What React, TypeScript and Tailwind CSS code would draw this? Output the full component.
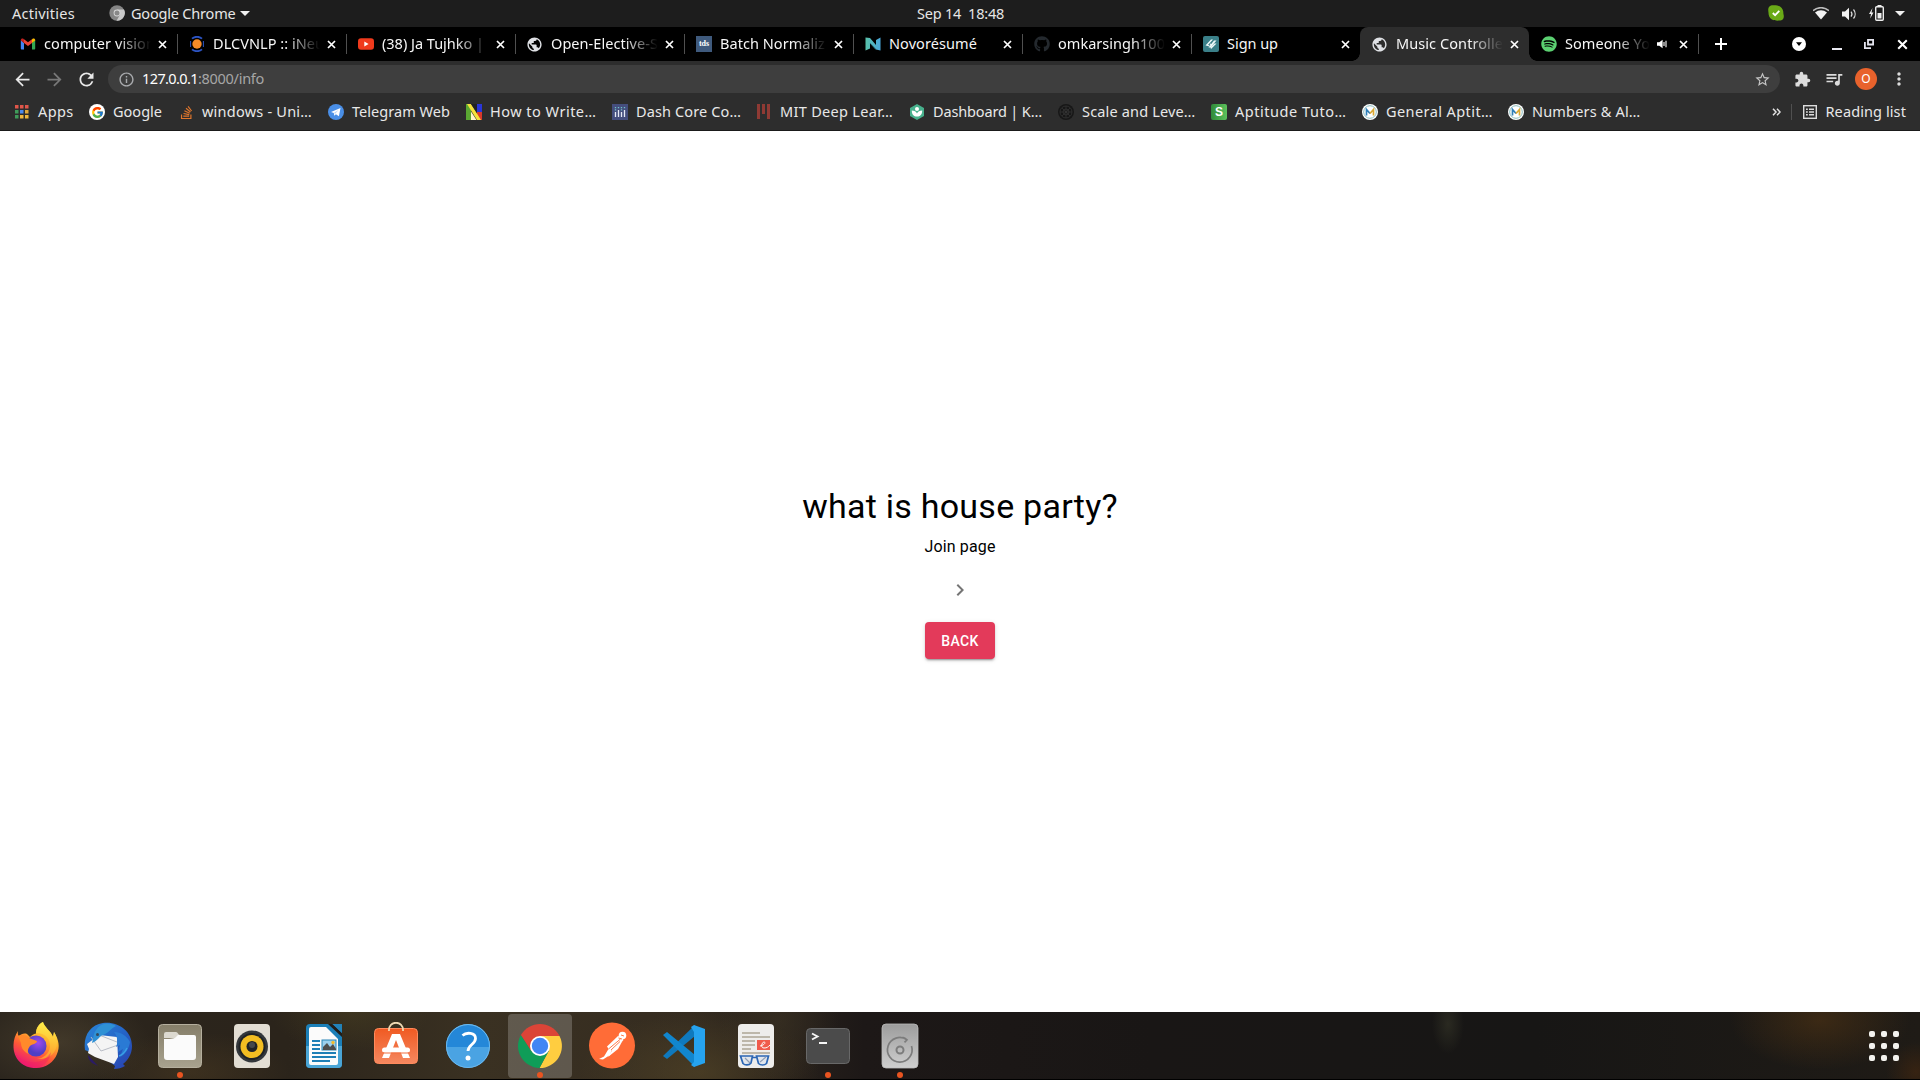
import React, { useLayoutEffect, useRef, useState } from "react";
import {
  MdArrowBack, MdArrowForward, MdRefresh, MdInfoOutline, MdStarBorder, MdExtension,
  MdQueueMusic, MdMoreVert, MdPublic, MdChevronRight,
} from "react-icons/md";
import { FaGithub, FaSpotify, FaStackOverflow } from "react-icons/fa";
import { FcGoogle } from "react-icons/fc";

/** A single line of text whose letter spacing is tuned so that it spans `w` pixels. */
function Fit({ w, children, className = "", flat = false }: { w: number; children: string; className?: string; flat?: boolean }) {
  const ref = useRef<HTMLSpanElement>(null);
  const [ls, setLs] = useState(0);
  useLayoutEffect(() => {
    if (ref.current) setLs((w - ref.current.getBoundingClientRect().width) / children.length);
  }, [w, children]);
  return (
    <span ref={ref} className={`inline-block whitespace-pre ${flat ? "" : "-translate-y-px"} ${className}`} style={{ letterSpacing: ls }}>
      {children}
    </span>
  );
}

const X = ({ s = 9 }: { s?: number }) => (
  <svg width={s} height={s} viewBox="0 0 9 9" stroke="#fff" strokeWidth="1.7">
    <path d="M1 1l7 7M8 1l-7 7" />
  </svg>
);

const Globe = () => <MdPublic size={17} color="#dfe1e5" className="-ml-px" />;

const Gmail = () => (
  <svg width="16" height="16" viewBox="0 0 16 16">
    <path d="M.8 4v8.4c0 .6.4 1 1 1H4V7z" fill="#4285f4" />
    <path d="M15.2 4v8.4c0 .6-.4 1-1 1H12V7z" fill="#34a853" />
    <path d="M12 3.4V7l3.2-2.4V4c0-1.5-1.7-2-2.6-1.2z" fill="#fbbc04" />
    <path d="M4 3.4V7L.8 4.6V4c0-1.5 1.7-2 2.6-1.2z" fill="#c5221f" />
    <path d="M4 7V3.3l4 3 4-3V7l-4 3z" fill="#ea4335" />
  </svg>
);
const Ineuron = () => (
  <svg width="16" height="16" viewBox="0 0 16 16">
    <circle cx="8" cy="8" r="4.7" fill="#f58a27" />
    <path d="M3 2.7a7.5 7.5 0 0 1 10 0M3 13.3a7.5 7.5 0 0 0 10 0" fill="none" stroke="#2c54c4" strokeWidth="1.8" />
    <path d="M1.6 5v6M14.4 5v6" stroke="#2c54c4" strokeWidth="1" />
  </svg>
);
const Youtube = () => (
  <svg width="16" height="16" viewBox="0 0 16 16">
    <rect x="0" y="2.3" width="16" height="11.4" rx="3" fill="#f03a1c" />
    <path d="M6.3 5.6v4.8L10.6 8z" fill="#fff" />
  </svg>
);
const Tds = () => (
  <span className="flex size-4 items-center justify-center bg-[#3f5a7d] pb-px font-['Liberation_Serif'] text-[8px] leading-none font-bold text-white">tds</span>
);
const Novo = () => (
  <svg width="16" height="16" viewBox="0 0 16 16">
    <defs><linearGradient id="nv"><stop stopColor="#58c1a8" /><stop offset="1" stopColor="#4aa8dc" /></linearGradient></defs>
    <path d="M.5 1.5L5 2l6 7V4l4.5-2.5v13L11 13.5 5 7v5.5L.5 14.5z" fill="url(#nv)" />
    <path d="M5 7l6 6.5" stroke="#2b7f8f" strokeWidth="1" />
  </svg>
);
const SignUp = () => (
  <svg width="16" height="16" viewBox="0 0 16 16">
    <rect width="16" height="16" rx="2" fill="#3a7f88" />
    <path d="M2.5 9.5h2L10 3.5H8zM5.5 11.5h2l6-7h-2.5zM8 13l5.5-5.5h-2L7.5 11.5z" fill="#f0fafa" />
    <path d="M3.5 9l3 1M7 8l2 1" stroke="#f0fafa" strokeWidth="1.2" />
  </svg>
);

type Tab = { icon: React.ReactNode; title: string; w: number; active?: boolean; sound?: boolean; sep?: boolean; fade?: boolean };
const tabs: Tab[] = [
  { icon: <Gmail />, title: "computer vision", w: 111, sep: true, fade: true },
  { icon: <Ineuron />, title: "DLCVNLP :: iNeu", w: 111, sep: true, fade: true },
  { icon: <Youtube />, title: "(38) Ja Tujhko |", w: 102, sep: true, fade: true },
  { icon: <Globe />, title: "Open-Elective-S", w: 107, sep: true, fade: true },
  { icon: <Tds />, title: "Batch Normaliz", w: 105, sep: true, fade: true },
  { icon: <Novo />, title: "Novorésumé", w: 88, sep: true },
  { icon: <FaGithub size={16} color="#24292e" />, title: "omkarsingh100", w: 107, sep: true, fade: true },
  { icon: <SignUp />, title: "Sign up", w: 51 },
  { icon: <Globe />, title: "Music Controlle", w: 107, active: true, fade: true },
  { icon: <FaSpotify size={16} color="#5bd071" />, title: "Someone Yo", w: 85, sep: true, sound: true, fade: true },
];

function TabItem({ t }: { t: Tab }) {
  return (
    <div className={`relative flex h-[34px] w-[169px] shrink-0 items-center pl-3 ${t.active ? "rounded-t-lg bg-[#2d2d2d]" : ""}`}>
      {t.active && (
        <>
          <span className="absolute bottom-0 -left-2 size-2 bg-[radial-gradient(circle_at_0_0,transparent_7.5px,#2d2d2d_8px)]" />
          <span className="absolute -right-2 bottom-0 size-2 bg-[radial-gradient(circle_at_100%_0,transparent_7.5px,#2d2d2d_8px)]" />
        </>
      )}
      <span className="flex size-4 shrink-0 items-center">{t.icon}</span>
      <span
        className={`ml-2 shrink-0 overflow-hidden text-[14.5px] leading-5 text-[#f6f6f6] ${t.sound ? "w-[85px]" : "w-[107px]"} ${t.fade ? "[mask-image:linear-gradient(to_right,#000_calc(100%-34px),transparent)]" : ""}`}
      >
        <Fit w={t.w}>{t.title}</Fit>
      </span>
      {t.sound && (
        <svg width="10" height="10" viewBox="0 0 10 10" className="ml-[7px] shrink-0">
          <path d="M0 3.3h2.3L5.6.8v8.4L2.3 6.7H0z" fill="#fff" />
          <path d="M7 3v4M9 1.800v6.400" stroke="#fff" strokeWidth="1.1" />
        </svg>
      )}
      <span className={`flex shrink-0 ${t.sound ? "ml-[12px]" : "ml-[7px]"}`}><X /></span>
      {t.sep && <span className="absolute top-[7px] right-[-1px] h-5 w-px bg-[#505050]" />}
    </div>
  );
}

const AppsIcon = () => (
  <svg width="16" height="16" viewBox="0 0 16 16">
    {["#e0564a", "#e0564a", "#e0564a", "#3f9c5a", "#4a8af0", "#e0a83a", "#3f9c5a", "#efb73e", "#efb73e"].map((c, i) => (
      <rect key={i} x={1 + (i % 3) * 5} y={1 + Math.floor(i / 3) * 5} width="3.5" height="3.5" fill={c} />
    ))}
  </svg>
);
const Mlogo = () => (
  <svg width="16" height="16" viewBox="0 0 16 16">
    <circle cx="8" cy="8" r="8" fill="#fff" />
    <circle cx="8" cy="8" r="6.3" fill="none" stroke="#7bb3b5" strokeWidth=".9" />
    <path d="M4.5 11.5v-6L8 9.5" fill="none" stroke="#2f7fb8" strokeWidth="1.7" />
    <path d="M8 9.5l3.5-4v6" fill="none" stroke="#d9a935" strokeWidth="1.7" />
  </svg>
);
const bookmarks: { icon: React.ReactNode; title: string; tw: number; w: number }[] = [
  { icon: <AppsIcon />, title: "Apps", tw: 35.5, w: 75 },
  { icon: <span className="flex size-4 items-center justify-center rounded-full bg-white"><FcGoogle size={13} /></span>, title: "Google", tw: 49, w: 89 },
  { icon: <FaStackOverflow size={15} color="#e0762c" className="ml-px" />, title: "windows - Uni…", tw: 110, w: 150 },
  {
    icon: <svg width="16" height="16" viewBox="0 0 16 16"><circle cx="8" cy="8" r="8" fill="#4a8fe7" /><path d="M3 8l9.5-4-1.6 8.2-3-2-1.6 1.5-.5-2.6z" fill="#fff" /><path d="M5.800 9.100L10.500 6 7.200 9.700" fill="#b9d2f5" /></svg>,
    title: "Telegram Web", tw: 98, w: 138,
  },
  {
    icon: <svg width="16" height="16" viewBox="0 0 16 16"><path d="M0 0h5v16H0z" fill="#5aa832" /><path d="M11 0h5v8h-5z" fill="#2a36d8" /><path d="M11 8h5v8h-5z" fill="#d8392b" /><path d="M1 0h4l10 16h-4z" fill="#f4e23c" /><path d="M5 7.5V16h5.5z" fill="#fff6c8" /><path d="M5 0h6v9z" fill="#222" /></svg>,
    title: "How to Write…", tw: 106.5, w: 146,
  },
  {
    icon: <svg width="16" height="16" viewBox="0 0 16 16"><rect width="16" height="16" fill="#454e7d" /><path d="M3.5 8v5M6.5 6v7M9.5 8v5M12.5 6v7" stroke="#e6e9f5" strokeWidth="1.3" /><path d="M3.5 3v4M6.5 3v2M9.5 3v4M12.5 3v2" stroke="#6fc3c8" strokeWidth="1.3" strokeDasharray="1.2 1" /></svg>,
    title: "Dash Core Co…", tw: 105, w: 144,
  },
  {
    icon: <svg width="16" height="16" viewBox="0 0 16 16"><path d="M1 0h3v15H1zM6 0h3v10H6zM11 0h3v15h-3z" fill="#8f3a34" /></svg>,
    title: "MIT Deep Lear…", tw: 113, w: 153,
  },
  {
    icon: <svg width="16" height="16" viewBox="0 0 16 16"><path d="M8 0l7 4v8l-7 4-7-4V4z" fill="#47b08c" /><circle cx="8" cy="5" r="2" fill="#fff" /><path d="M2.8 6.5c2.5 0 4.5 1.3 5.2 3 .7-1.7 2.7-3 5.2-3 0 4-2 6-5.2 6s-5.2-2-5.2-6z" fill="#fff" /></svg>,
    title: "Dashboard | K…", tw: 109, w: 149,
  },
  {
    icon: <svg width="16" height="16" viewBox="0 0 16 16" fill="none" stroke="#3a3a3a" strokeWidth=".6"><circle cx="8" cy="8" r="8" fill="#171717" stroke="none" /><circle cx="8" cy="8" r="6" /><circle cx="8" cy="8" r="3" /><path d="M8 2v12M2 8h12M4 4l8 8M12 4l-8 8" /></svg>,
    title: "Scale and Leve…", tw: 113.5, w: 153,
  },
  { icon: <span className="flex size-4 items-center justify-center rounded-[2px] bg-linear-to-r from-[#2f8a3a] to-[#5cc25c] font-['Liberation_Sans'] text-[12px] font-bold text-white">S</span>, title: "Aptitude Tuto…", tw: 111.5, w: 151 },
  { icon: <Mlogo />, title: "General Aptit…", tw: 107, w: 146 },
  { icon: <Mlogo />, title: "Numbers & Al…", tw: 108.5, w: 150 },
];

function TopBar() {
  return (
    <div className="grid h-[27px] grid-cols-3 items-center bg-[#1d1d1d] text-[14.5px] leading-[26px] text-[#e6e6e6]">
      <div className="flex items-center pl-3">
        <Fit w={63}>Activities</Fit>
        <svg width="16" height="16" viewBox="0 0 16 16" className="-mt-px ml-[34px]">
          <circle cx="8" cy="8" r="7.7" fill="#858585" />
          <path d="M8 4.5h7a7.7 7.7 0 0 1-7.5 11.2l3.5-6z" fill="#c8c8c8" />
          <circle cx="8" cy="8" r="3.4" fill="#d8d8d8" /><circle cx="8" cy="8" r="2.5" fill="#888" />
        </svg>
        <Fit w={104.5} className="ml-[6px]">Google Chrome</Fit>
        <svg width="10" height="5" className="ml-[4.5px]"><path d="M0 0h10L5 5z" fill="#f0f0f0" /></svg>
      </div>
      <div className="pl-px text-center"><Fit w={87}>Sep 14  18:48</Fit></div>
      <div className="flex items-center justify-end pr-[15px]">
        <svg width="16" height="16" viewBox="0 0 16 16" className="-mt-px">
          <path d="M4 .3C7 0 10 .3 12 1.5c3 2 3.5 5 3.4 7.5.8 2 .8 6-3 6.5-3 .3-6 .3-8.500-1C1 12.500.5 10 .5 7.500 0 5-.2 1 4 .3z" fill="#6aaa17" />
          <path d="M4.800 8l2.300 2.200 4.200-4.300" fill="none" stroke="#fff" strokeWidth="1.8" />
        </svg>
        <svg width="16" height="13" viewBox="0 0 16 13" className="ml-[29px]">
          <path d="M0 3.7A12 12 0 0 1 16 3.7" fill="none" stroke="#bbb" strokeWidth="1.5" />
          <path d="M2 5.5a9.5 9.5 0 0 1 12 0L8 12.5z" fill="#f2f2f2" />
        </svg>
        <svg width="15" height="14" viewBox="0 0 15 14" className="ml-[13px]">
          <path d="M0 4.5h3L7 .8v12.4L3 9.5H0z" fill="#f2f2f2" />
          <path d="M9 4.5a4 4 0 0 1 0 5M11.5 2.5a7 7 0 0 1 0 9" fill="none" stroke="#ddd" strokeWidth="1.2" />
        </svg>
        <svg width="16" height="16" viewBox="0 0 16 16" className="-mt-px ml-3">
          <path d="M3.5 3L0 9h2l-.8 4.5L4.5 7.5h-2z" fill="#eee" />
          <path d="M8.5 0h4v2h-4z" fill="#eee" /><rect x="6.7" y="1.7" width="7.6" height="13.6" rx="1" fill="none" stroke="#eee" strokeWidth="1.4" />
          <path d="M8.5 8h4v5.5h-4z" fill="#eee" />
        </svg>
        <svg width="10" height="5" className="ml-[10px]"><path d="M0 0h10L5 5z" fill="#f0f0f0" /></svg>
      </div>
    </div>
  );
}

const Dot = () => <span className="absolute bottom-0 left-[29px] size-[6px] rounded-full bg-[#e95420]" />;

const dock: { svg: React.ReactNode; dot?: boolean; active?: boolean }[] = [
  {
    svg: (
      <>
        <defs>
          <linearGradient id="ff" x1=".8" y1="0" x2=".3" y2="1"><stop stopColor="#fff44f" /><stop offset=".35" stopColor="#ffb32c" /><stop offset=".65" stopColor="#ff5a36" /><stop offset="1" stopColor="#e9107e" /></linearGradient>
          <radialGradient id="fp" cx=".6" cy=".35"><stop stopColor="#a048f0" /><stop offset="1" stopColor="#4f3fc4" /></radialGradient>
          <linearGradient id="fy" x1="0" y1="0" x2="0" y2="1"><stop stopColor="#fff04a" /><stop offset="1" stopColor="#ffa52c" /></linearGradient>
        </defs>
        <path d="M6 9c-.5 3 0 4 1 5 2-2 5-3 8-2l3 3c2-2 3.5-3 6-3.5C24 6 27 2 31 0c1 5 8 9 10 15l1-5c5 8 6 15 3 22-3 8-11 14-21 14C11 46 1 37 1.5 23 1.7 18 3 13 6 9z" fill="url(#ff)" />
        <path d="M31 0c-4 2-7 6-7 11 9 0 15 6 14 14-1 7-6 11-13 12 12 1 20-6 20-17 0-4-1-7-3-10l-1 5C39 9 32 5 31 0z" fill="url(#fy)" opacity=".8" />
        <circle cx="24" cy="24" r="10.5" fill="url(#fp)" />
        <path d="M6 14c4-2 9-1 11 2l8 3c0 3-5 3-7 5-2 3-3 5-1 8-5-2-8-6-8-11z" fill="#ff8a2b" />
        <path d="M3 30c4 8 12 11 21 10 8-1 12-5 15-10-1 10-9 16-17 16S5 40 3 30z" fill="#f01e63" opacity=".45" />
      </>
    ),
  },
  {
    svg: (
      <>
        <defs><linearGradient id="tb" x1="0" y1="0" x2="1" y2="1"><stop stopColor="#2a86d8" /><stop offset=".5" stopColor="#2465c8" /><stop offset="1" stopColor="#2a3fae" /></linearGradient></defs>
        <path d="M19 1c15-2 29 8 29 23 0 8-4 14-9 18l2 2c-3 2-7 3-11 3l1-3-8-6L1 28C-1 14 6 3 19 1z" fill="url(#tb)" />
        <path d="M4 33l10 11-6-3c-3-3-4-5-4-8z" fill="#2b1b66" />
        <path d="M3 22l12-9 18 2 1 20-4 7-19-7-7-4 1-4z" fill="#f4f4f4" />
        <path d="M7 15l10 14 17-6M15 13l18 7" fill="none" stroke="#b9bdc6" strokeWidth="1" />
        <path d="M10 12C14 2 22-1 32 4c-5 2-7 7-13 9-4 1-5 6-11 8z" fill="#2f91d5" />
        <path d="M30 10c4 5 4 11 2 15l4-2-2 7 5-3-3 8c6-3 9-9 10-15-3-6-9-10-16-10z" fill="#2a7ad4" />
        <path d="M35 34c3-1 6-4 8-8" fill="none" stroke="#3aa0e6" strokeWidth="1.5" />
        <circle cx="13.5" cy="12.5" r="1.5" fill="#35495c" />
      </>
    ),
  },
  {
    dot: true,
    svg: (
      <>
        <defs><linearGradient id="fd" x1="0" y1="0" x2="0" y2="1"><stop stopColor="#857e69" /><stop offset="1" stopColor="#a8a28f" /></linearGradient></defs>
        <rect x="2.5" y="2.5" width="43" height="43" rx="4" fill="url(#fd)" stroke="#b5af9e" />
        <path d="M8 12a2 2 0 0 1 2-2h10c2 0 2 3 4 3h-1l-2 3H8z" fill="#dcd9d0" />
        <path d="M8 17c5 0 10 0 12-2l2-2h16a2 2 0 0 1 2 2v20a3 3 0 0 1-3 3H11a3 3 0 0 1-3-3z" fill="#fbfbfb" />
      </>
    ),
  },
  {
    svg: (
      <>
        <rect x="6" y="2" width="36" height="44" rx="4" fill="#e2ddd3" />
        <circle cx="24" cy="24.5" r="16" fill="#33373b" /><circle cx="24" cy="24.5" r="13.5" fill="#1f2225" />
        <circle cx="24" cy="24.5" r="11.5" fill="#f2bd22" /><circle cx="24" cy="24.5" r="5.5" fill="#202326" /><circle cx="24" cy="23" r="3" fill="#44484c" />
      </>
    ),
  },
  {
    svg: (
      <>
        <path d="M10 2h24l8 0v9l0 31a4 4 0 0 1-4 4H10a4 4 0 0 1-4-4V6a4 4 0 0 1 4-4z" fill="#1b7fb8" />
        <path d="M6 24h36v18a4 4 0 0 1-4 4H10a4 4 0 0 1-4-4z" fill="#4aa5d6" />
        <path d="M28 2h4.5l9.5 9v4z" fill="#221d18" /><path d="M32.5 2H40a2 2 0 0 1 2 2v7z" fill="#2382b8" />
        <path d="M11 5h15l12 12v24a2 2 0 0 1-2 2H11a2 2 0 0 1-2-2V7a2 2 0 0 1 2-2z" fill="#fbfbfb" />
        <path d="M12 19h8M12 23h8M12 27h8M12 31h24M12 35h24M12 39h18" stroke="#1e7fb6" strokeWidth="2" />
        <rect x="22" y="18" width="14" height="10" fill="#9bd0ef" stroke="#2b86b8" /><path d="M23 28v-3l4-4 3 4 3-3 3 5v1z" fill="#4e4e4e" /><circle cx="33" cy="20.5" r="1.7" fill="#f3bd2f" />
      </>
    ),
  },
  {
    svg: (
      <>
        <defs><linearGradient id="sw" x1="0" y1="0" x2="0" y2="1"><stop stopColor="#f05a22" /><stop offset="1" stopColor="#f58860" /></linearGradient></defs>
        <rect x="2.5" y="6.5" width="43" height="35" rx="4" fill="url(#sw)" stroke="#ff8a5c" />
        <path d="M17 9c-1-11 15-11 14 0" fill="none" stroke="#efd9b3" strokeWidth="1.8" />
        <path d="M20 12h8l10 24h-7l-7-18-7 18h-7z" fill="#fff" /><rect x="10" y="25.5" width="28" height="5" rx="2.5" fill="#fff" /><path d="M11 31h26" stroke="#f26f3e" strokeWidth="1" />
      </>
    ),
  },
  {
    svg: (
      <>
        <circle cx="24" cy="24" r="22" fill="#4aa3e3" /><path d="M2 25a22 22 0 0 1 44 0z" fill="#2487d8" />
        <circle cx="24" cy="24" r="21.5" fill="none" stroke="#6bb8ee" />
        <path d="M18.5 13.5c4-3.5 13-3 13 3 0 6-7.5 6-7.5 12.5" fill="none" stroke="#fff" strokeWidth="2.8" /><circle cx="24" cy="36" r="2.5" fill="#fff" />
      </>
    ),
  },
  {
    dot: true, active: true,
    svg: (
      <>
        <path d="M4.95 13A22 22 0 0 1 43.05 13L43.5 14H24z" fill="#db4437" />
        <path d="M24 14h19.5A22 22 0 0 1 23.5 46L32.7 29z" fill="#ffcd40" />
        <path d="M4.95 13A22 22 0 0 0 23.5 46L32.7 29 24 34 15.3 29z" fill="#0f9d58" />
        <path d="M4.95 13L15.3 29l8.7-15 19 0V13H30z" fill="#db4437" />
        <circle cx="24" cy="24" r="10" fill="#fff" /><circle cx="24" cy="24" r="8.2" fill="#4285f4" />
      </>
    ),
  },
  {
    svg: (
      <>
        <circle cx="24" cy="23.5" r="23" fill="#ff6c37" />
        <path d="M19 24.5L30 14l4 1.5 1.5 2.5L24 28.5l-3-1z" fill="#fff" />
        <path d="M24 27l-2 6-7 4.5-4-.5 5-2.5 6-10z" fill="#fff" />
        <path d="M27 24l8-6-5 9-10 8 6-10z" fill="#fff" />
        <circle cx="34.5" cy="13.5" r="3.8" fill="#fff" />
        <path d="M20.5 27l12-10M23 28l9-8.5M33 13l3 1M30.5 16l3.5 1" stroke="#ff6c37" strokeWidth=".9" />
      </>
    ),
  },
  {
    svg: (
      <>
        <path d="M3 34l4 3L35 14V3z" fill="#0f79bd" /><path d="M3 13l4-3L35 33v12z" fill="#1186ce" />
        <path d="M34 3l11 4v34l-11 4-3-2 3-3V10l-3-5z" fill="#26a3ef" />
      </>
    ),
  },
  {
    svg: (
      <>
        <rect x="6" y="2" width="36" height="44" rx="4" fill="#eeedeb" />
        <path d="M10 11h18M10 15h28M10 19h13M10 23h13M10 27h9M10 31h28" stroke="#bdb7aa" strokeWidth="2" />
        <rect x="25" y="18" width="13" height="10" fill="#f05b4c" /><path d="M28 24c5-1 6-4 4-4s-4 6 0 6c3 0 4-1 6-3" fill="none" stroke="#fff" />
        <path d="M8.5 34h12l-1.5 7c-2 2.5-6 2.5-8 .5zM24.5 34h12l-2 7.5c-2 2-6 2-8 0zM20 35.5h5" fill="#e0e5ec" stroke="#2b66b4" strokeWidth="1.7" />
        <path d="M13 36l5 5M34 35l-6 5" stroke="#8d9db5" strokeWidth="1.2" />
      </>
    ),
  },
  {
    dot: true,
    svg: (
      <>
        <rect x="2.5" y="6.5" width="43" height="35" rx="4" fill="#4b4b4b" stroke="#686868" />
        <path d="M8 11.5l5.5 3-5.5 3M15 21h8" fill="none" stroke="#f5f5f5" strokeWidth="1.9" />
      </>
    ),
  },
  {
    dot: true,
    svg: (
      <>
        <defs><linearGradient id="dk" x1="0" y1="0" x2="0" y2="1"><stop stopColor="#9c9c9c" /><stop offset="1" stopColor="#cfcfcf" /></linearGradient></defs>
        <rect x="6" y="2" width="36" height="44" rx="4" fill="url(#dk)" stroke="#bdbdbd" strokeWidth=".8" />
        <path d="M35.5 24A12.3 12.3 0 1 1 31 17.8M26.5 15.3c2 .5 3.500 1.500 4.500 2.500l-2.500 2.500" fill="none" stroke="#7c7c7c" strokeWidth="1.7" />
        <circle cx="24" cy="28" r="3.5" fill="none" stroke="#7c7c7c" strokeWidth="2" />
      </>
    ),
  },
];

export default function App() {
  return (
    <div className="flex h-[1080px] w-[1920px] flex-col overflow-hidden bg-white font-['Noto_Sans',sans-serif]">
      <TopBar />

      <div className="flex h-[34px] items-center bg-black pl-[8px]">
        {tabs.map((t) => <TabItem key={t.title} t={t} />)}
        <svg width="12" height="12" viewBox="0 0 12 12" className="ml-[17px]"><path d="M6 0v12M0 6h12" stroke="#fff" strokeWidth="2" /></svg>
        <div className="ml-auto flex items-center pr-[12px]">
          <svg width="14" height="14" viewBox="0 0 14 14"><circle cx="7" cy="7" r="7" fill="#fff" /><path d="M4 5.3h6L7 9z" fill="#000" /></svg>
          <span className="mt-[9px] ml-[26px] h-[2px] w-[10px] bg-[#e8e8f0]" />
          <svg width="10" height="10" viewBox="0 0 10 10" className="ml-[22px]" fill="none" stroke="#e4e4ee" strokeWidth="1.8"><path d="M4 .9h5.1v4.6H4zM.9 3v6.1H7" /></svg>
          <span className="ml-[23px] flex"><X s={11} /></span>
        </div>
      </div>

      <div className="flex h-9 items-center bg-[#2d2d2d] pr-[11px] pl-[11.5px]">
        <MdArrowBack size={21} color="#e8e8e8" />
        <MdArrowForward size={21} color="#787878" className="ml-[11px]" />
        <MdRefresh size={21} color="#e8e8e8" className="ml-[11px]" />
        <div className="ml-[11.5px] flex h-7 w-[1672px] items-center rounded-full bg-[#3e3e3e] pr-[9.5px] pl-[9.5px] text-[14.5px]">
          <MdInfoOutline size={17} color="#a9abae" />
          <Fit flat w={56} className="ml-[7.5px] text-white">127.0.0.1</Fit>
          <Fit flat w={66} className="text-[#a6a6a6]">:8000/info</Fit>
          <MdStarBorder size={17} color="#c6c6c6" className="ml-auto" />
        </div>
        <MdExtension size={17} color="#dcdcdc" className="ml-[14px]" />
        <MdQueueMusic size={20} color="#dcdcdc" className="ml-[13px]" />
        <span className="ml-[11px] flex size-[22px] items-center justify-center rounded-full bg-[#e8622c] text-[12px] leading-none text-white">O</span>
        <MdMoreVert size={20} color="#dcdcdc" className="ml-auto" />
      </div>

      <div className="flex h-[34px] border-b border-[#1a1a1a] bg-[#2d2d2d] pb-[3px] pl-[14px] text-[14.5px] leading-5 text-[#e8e8e8]">
        {bookmarks.map((b) => (
          <div key={b.title} className="flex shrink-0 items-center" style={{ width: b.w }}>
            <span className="flex size-4 shrink-0 items-center">{b.icon}</span>
            <Fit w={b.tw} className="ml-2">{b.title}</Fit>
          </div>
        ))}
        <div className="ml-auto flex items-center pr-[14px]">
          <svg width="9" height="8" viewBox="0 0 9 8" fill="none" stroke="#e4e4e4" strokeWidth="1.5"><path d="M1 .8L4 4 1 7.2M5 .8L8 4 5 7.2" /></svg>
          <span className="ml-[10px] h-4 w-px bg-[#505050]" />
          <svg width="14" height="14" viewBox="0 0 14 14" className="ml-[11px]" fill="none" stroke="#dcdcdc"><rect x=".7" y=".7" width="12.6" height="12.6" strokeWidth="1.4" /><path d="M3 4.2h1.8M3 7h1.8M3 9.8h1.8M6 4.2h5M6 7h5M6 9.8h5" strokeWidth="1.5" /></svg>
          <Fit w={80.5} className="ml-[9px]">Reading list</Fit>
        </div>
      </div>

      <main className="flex h-[881px] flex-col items-center bg-white pt-[354px] font-['Roboto',sans-serif] text-black">
        <h4 className="text-[34px] leading-[42px] tracking-[0.00735em]">what is house party?</h4>
        <p className="mt-2 text-base leading-6 tracking-[0.00938em]">Join page</p>
        <MdChevronRight size={24} color="#757575" className="mt-[19px]" />
        <button className="mt-[20px] h-[36.5px] w-[70px] rounded bg-[#e33a5a] pt-px text-sm font-medium tracking-[0.02857em] text-white shadow-[0_3px_1px_-2px_rgba(0,0,0,.2),0_2px_2px_0_rgba(0,0,0,.14),0_1px_5px_0_rgba(0,0,0,.12)]">BACK</button>
      </main>

      <div className="flex h-[68px] items-start border-b border-black bg-[radial-gradient(ellipse_90px_50px_at_60px_30px,rgba(88,76,54,.5),transparent),radial-gradient(ellipse_80px_40px_at_350px_0px,rgba(85,75,35,.35),transparent),radial-gradient(ellipse_100px_40px_at_190px_60px,rgba(85,65,35,.4),transparent),radial-gradient(ellipse_120px_60px_at_700px_60px,rgba(90,75,40,.5),transparent),radial-gradient(ellipse_60px_60px_at_780px_10px,rgba(70,60,40,.4),transparent),radial-gradient(ellipse_16px_30px_at_1448px_12px,rgba(50,50,38,.7),transparent),radial-gradient(ellipse_90px_50px_at_1820px_8px,rgba(80,52,20,.6),transparent),radial-gradient(ellipse_30px_30px_at_1916px_60px,rgba(70,40,15,.6),transparent),linear-gradient(90deg,#2b251d_0%,#2b241b_15%,#3a3122_25%,#352c20_36%,#1d1817_45%,#191615_60%,#171615_80%,#1f1b16_100%)] pt-[2px] pl-1">
        {dock.map((d, i) => (
          <div key={i} className={`relative mr-2 flex h-16 w-16 shrink-0 items-center justify-center rounded ${d.active ? "bg-white/20" : ""}`}>
            <svg width="48" height="48" viewBox="0 0 48 48">{d.svg}</svg>
            {d.dot && <Dot />}
          </div>
        ))}
        <div className="mt-[17px] mr-[21px] ml-auto grid grid-cols-3 gap-[6px]">
          {Array.from({ length: 9 }, (_, i) => <span key={i} className="size-[6px] rounded-[2px] bg-[#f3f2ee]" />)}
        </div>
      </div>
    </div>
  );
}
